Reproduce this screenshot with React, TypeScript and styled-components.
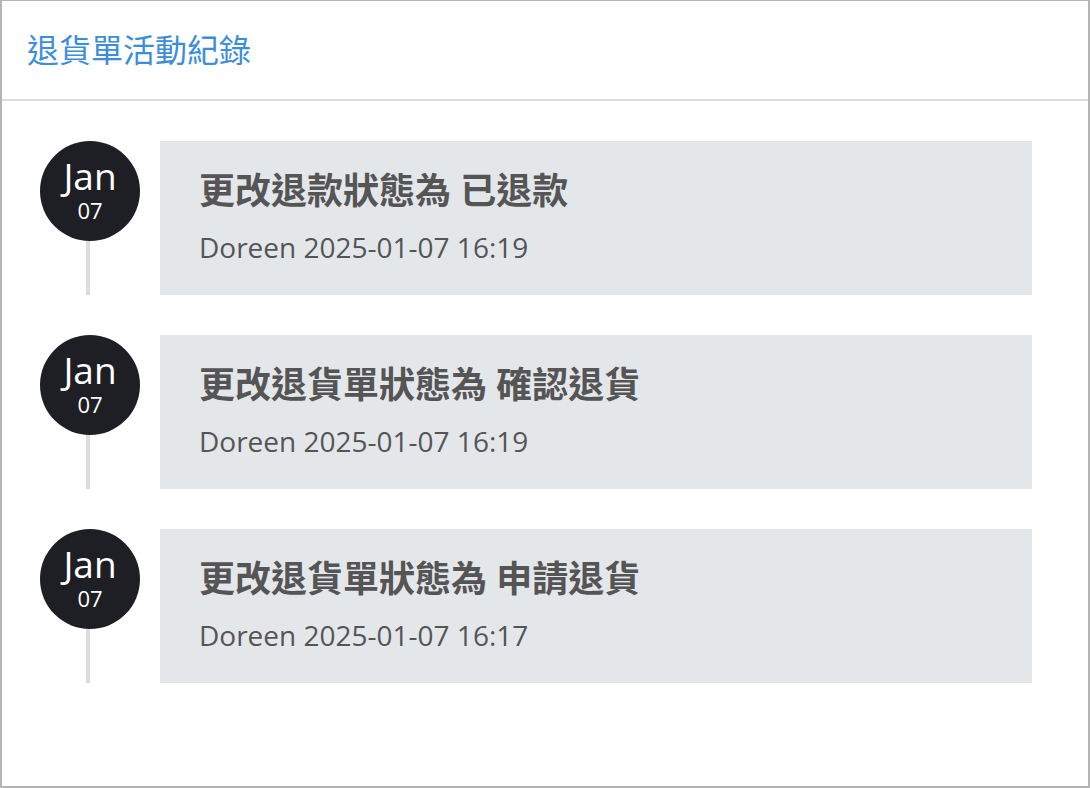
import React from "react";
import styled, { createGlobalStyle } from "styled-components";

const GlobalStyle = createGlobalStyle`
  html, body { margin: 0; padding: 0; background: #ffffff; }
  body { font-family: "Open Sans", "Noto Sans CJK TC", sans-serif; }
  * { box-sizing: border-box; }
`;

const Frame = styled.div`
  width: 1090px;
  height: 788px;
  border: 2px solid #b4b4b4;
  border-top-width: 1px;
  background: #ffffff;
  display: flex;
  flex-direction: column;
`;

const Header = styled.div`
  height: 100px;
  flex: none;
  border-bottom: 2px solid #dcdcdc;
  display: flex;
  align-items: center;
  padding-left: 25px;
`;

const Title = styled.h1`
  margin: 0;
  font-family: "Open Sans", "Noto Sans CJK TC", sans-serif;
  font-size: 32px;
  font-weight: 400;
  line-height: 1;
  color: #3c8edb;
`;

const Timeline = styled.div`
  display: flex;
  flex-direction: column;
  padding: 40px 56px 0 36px;
`;

const Item = styled.div<{ $last?: boolean }>`
  display: flex;
  align-items: stretch;
  gap: 20px;
  padding-bottom: ${(p) => (p.$last ? "0" : "40px")};
`;

const Rail = styled.div`
  width: 102px;
  flex: none;
  display: flex;
  flex-direction: column;
  align-items: flex-start;
`;

const Circle = styled.div`
  width: 100px;
  height: 100px;
  margin-left: 2px;
  border-radius: 50%;
  background: #1e1f24;
  color: #ffffff;
  display: flex;
  flex-direction: column;
  align-items: center;
  justify-content: center;
  gap: 8px;
  flex: none;
`;

const Month = styled.div`
  font-size: 37px;
  line-height: 30px;
`;

const Day = styled.div`
  font-size: 22px;
  line-height: 22px;
`;

const Line = styled.div`
  flex: 1;
  width: 4px;
  margin-left: 48px;
  background: #dcdcdc;
`;

const Card = styled.div`
  flex: 1;
  height: 154px;
  background: #e4e7ea;
  padding: 28px 40px 0 39px;
  display: flex;
  flex-direction: column;
`;

const CardTitle = styled.div`
  font-family: "Open Sans", "Noto Sans CJK TC", sans-serif;
  font-size: 36px;
  font-weight: 700;
  line-height: 44px;
  color: #555555;
`;

const Meta = styled.div`
  font-size: 28px;
  line-height: 36px;
  margin-top: 16px;
  color: #555555;
`;

const entries = [
  { title: "更改退款狀態為 已退款", meta: "Doreen 2025-01-07 16:19" },
  { title: "更改退貨單狀態為 確認退貨", meta: "Doreen 2025-01-07 16:19" },
  { title: "更改退貨單狀態為 申請退貨", meta: "Doreen 2025-01-07 16:17" },
];

export default function App() {
  return (
    <>
      <GlobalStyle />
      <Frame>
        <Header>
          <Title>退貨單活動紀錄</Title>
        </Header>
        <Timeline>
          {entries.map((e, i) => (
            <Item key={i} $last={i === entries.length - 1}>
              <Rail>
                <Circle>
                  <Month>Jan</Month>
                  <Day>07</Day>
                </Circle>
                <Line />
              </Rail>
              <Card>
                <CardTitle>{e.title}</CardTitle>
                <Meta>{e.meta}</Meta>
              </Card>
            </Item>
          ))}
        </Timeline>
      </Frame>
    </>
  );
}
